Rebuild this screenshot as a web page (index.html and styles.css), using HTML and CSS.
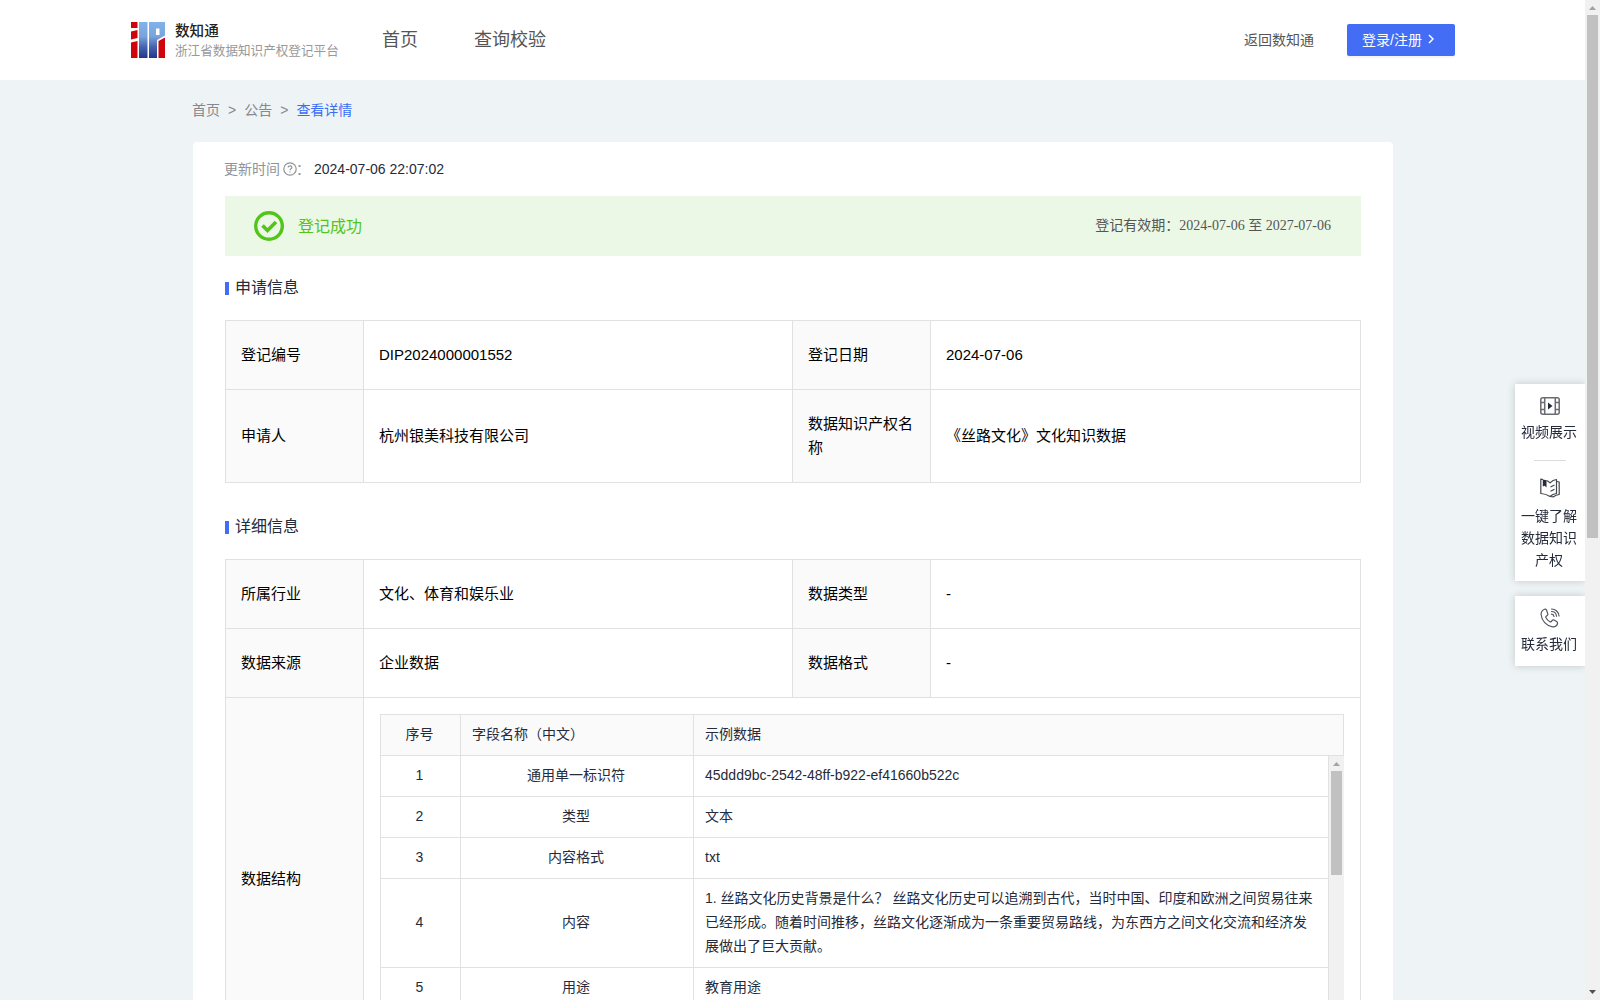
FILE: index.html
```html
<!DOCTYPE html>
<html lang="zh-CN">
<head>
    <meta charset="UTF-8">
    <meta name="viewport" content="width=device-width, initial-scale=1.0">
    <title>浙江省数据知识产权登记平台</title>
    <link rel="stylesheet" href="styles.css">
</head>
<body>
    <div class="page">
        <header class="header">
            <div class="logo">
                <svg class="logo-img" width="34" height="36" viewBox="0 0 34 36">
                    <defs>
                        <linearGradient id="blue" gradientUnits="userSpaceOnUse" x1="0" y1="0" x2="0" y2="36">
                            <stop offset="0" stop-color="#7fb4ea"/>
                            <stop offset="0.4" stop-color="#7aa3dc"/>
                            <stop offset="0.7" stop-color="#4562ae"/>
                            <stop offset="1" stop-color="#24368a"/>
                        </linearGradient>
                    </defs>
                    <path fill="#d0050c" d="M0 0h6.500v6H0zM0 9.500L6.500 8v8L0 17.500zM0 20.500L6.500 19v17H0zM27.500 19l6.500-3.500V36h-6.500z"/>
                    <path fill="url(#blue)" d="M8 0h8.500v36H8z"/>
                    <path fill="url(#blue)" fill-rule="evenodd" d="M18 0h16v13.500l-8 4.500v18h-8zM25 6.500v6.500h3.500V6.500z"/>
                </svg>
                <div class="logo-text">
                    <strong>数知通</strong>
                    <span>浙江省数据知识产权登记平台</span>
                </div>
            </div>
            <nav class="nav">
                <a>首页</a>
                <a>查询校验</a>
            </nav>
            <a class="back">返回数知通</a>
            <button class="login">登录/注册
                <svg width="6" height="10" viewBox="0 0 6 10"><path d="M1 1l4 4-4 4" fill="none" stroke="#fff" stroke-width="1.5"/></svg>
            </button>
        </header>

        <main class="main">
            <div class="breadcrumb">
                <span>首页</span><i>&gt;</i><span>公告</span><i>&gt;</i><span class="current">查看详情</span>
            </div>

            <div class="card">
                <div class="update">
                    <span>更新时间</span>
                    <svg width="14" height="14" viewBox="0 0 14 14" fill="none" stroke="#909399" stroke-width="1.2">
                        <circle cx="7" cy="7" r="6.200"/>
                        <path d="M5.200 5.600c0-2.400 3.700-2.300 3.700-.1 0 1.400-1.900 1.300-1.900 2.700M7 9.400v1.200"/>
                    </svg>
                    <span class="colon">：</span>
                    <b>2024-07-06 22:07:02</b>
                </div>

                <!-- 登记状态 -->
                <div class="status">
                    <svg width="30" height="30" viewBox="0 0 30 30" fill="none" stroke="#52c41a">
                        <circle cx="15" cy="15" r="13.300" stroke-width="3.400"/>
                        <path d="M8.500 14.500l5 5 8.500-8.500" stroke-width="3.600"/>
                    </svg>
                    <span class="status-text">登记成功</span>
                    <span class="valid">登记有效期：2024-07-06 至 2027-07-06</span>
                </div>

                <h2 class="title"><span>申请信息</span></h2>
                <table class="info">
                    <colgroup><col class="c1"><col class="c2"><col class="c3"><col class="c4"></colgroup>
                    <tr>
                        <th>登记编号</th><td>DIP2024000001552</td>
                        <th>登记日期</th><td>2024-07-06</td>
                    </tr>
                    <tr>
                        <th>申请人</th><td>杭州银美科技有限公司</td>
                        <th>数据知识产权名称</th><td>《丝路文化》文化知识数据</td>
                    </tr>
                </table>

                <h2 class="title"><span>详细信息</span></h2>
                <table class="info">
                    <colgroup><col class="c1"><col class="c2"><col class="c3"><col class="c4"></colgroup>
                    <tr>
                        <th>所属行业</th><td>文化、体育和娱乐业</td>
                        <th>数据类型</th><td>-</td>
                    </tr>
                    <tr>
                        <th>数据来源</th><td>企业数据</td>
                        <th>数据格式</th><td>-</td>
                    </tr>
                    <tr>
                        <th>数据结构</th>
                        <td class="nested" colspan="3">
                            <div class="grid">
                                <div class="row head">
                                    <div class="no">序号</div><div class="name">字段名称（中文）</div><div class="sample">示例数据</div>
                                </div>
                                <div class="grid-body">
                                    <div class="rows">
                                        <div class="row">
                                            <div class="no">1</div><div class="name">通用单一标识符</div><div class="sample">45ddd9bc-2542-48ff-b922-ef41660b522c</div>
                                        </div>
                                        <div class="row">
                                            <div class="no">2</div><div class="name">类型</div><div class="sample">文本</div>
                                        </div>
                                        <div class="row">
                                            <div class="no">3</div><div class="name">内容格式</div><div class="sample">txt</div>
                                        </div>
                                        <div class="row">
                                            <div class="no">4</div><div class="name">内容</div><div class="sample">1. 丝路文化历史背景是什么？ 丝路文化历史可以追溯到古代，当时中国、印度和欧洲之间贸易往来已经形成。随着时间推移，丝路文化逐渐成为一条重要贸易路线，为东西方之间文化交流和经济发展做出了巨大贡献。</div>
                                        </div>
                                        <div class="row">
                                            <div class="no">5</div><div class="name">用途</div><div class="sample">教育用途</div>
                                        </div>
                                    </div>
                                    <div class="bar bar-inner">
                                        <svg width="15" height="15"><path d="M4 10l3.500-4 3.500 4z" fill="#a3a3a3"/></svg>
                                        <div class="thumb"></div>
                                    </div>
                                </div>
                            </div>
                        </td>
                    </tr>
                </table>
            </div>
        </main>
    </div>

    <!-- 右侧悬浮栏 -->
    <aside class="side">
        <div class="side-box">
            <div class="side-item">
                <svg width="20" height="18" viewBox="0 0 20 18" fill="none" stroke="#6b6c72" stroke-width="1.500">
                    <rect x=".8" y=".8" width="18.400" height="16.400" rx="2"/>
                    <path d="M4.700 1v16M15.300 1v16M1 5.500h3.700M1 12.500h3.700M15.300 5.500H19M15.300 12.500H19"/>
                    <path d="M8 5.500v7l4.500-3.500z" fill="#252b3a" stroke="none"/>
                </svg>
                <span>视频展示</span>
            </div>
            <hr>
            <div class="side-item book">
                <svg width="20" height="20" viewBox="0 0 20 20" fill="none" stroke="#44464e" stroke-width="1.200" stroke-linejoin="round">
                    <path d="M3 1.500L.8 1.200v14.300c4 .2 6.500 1.200 9.200 3 1.500-1.600 3.500-2.700 6.500-3V1.500c-2.700.3-4.700 1.500-6.500 3.300-1-1-2-1.700-3.500-2.300"/>
                    <path d="M17 3.500l2.200.5v12.500c-2.200.2-4 .9-5.700 2.300L10 18.500M10.500 9l4-2M10.500 13.200l4-2"/>
                    <path d="M2.800 1.500l3.700.8V9.500L4.700 7.700 2.800 8.500z" fill="#252b3a" stroke="none"/>
                </svg>
                <span>一键了解数据知识产权</span>
            </div>
        </div>
        <div class="side-box contact">
            <div class="side-item">
                <svg width="20" height="20" viewBox="0 0 20 20" fill="none" stroke="#55575e" stroke-width="1.200" stroke-linecap="round">
                    <path d="M4.500 1.200C2.500 2 1 4 1.100 6.500 1.500 12.500 6.500 18 12.500 18.800c2.500.2 4.500-1.300 5-3.300.2-.8 0-1.300-.6-1.700l-2.800-1.700c-.7-.4-1.500-.2-2 .4l-.8 1c-.4.400-.9.500-1.400.200-1.900-1-3.200-2.400-4-4.200-.2-.5-.1-1 .3-1.300l1.200-1c.5-.5.600-1.200.300-1.800L6.400 1.800c-.4-.7-1.100-.9-1.900-.6z"/>
                    <path d="M11.500 1c4 0 7.300 3 7.500 7M11.500 3.500c2.700 0 4.700 2 5 4.700M11.500 6.200c1.400.1 2.300 1 2.500 2.300"/>
                </svg>
                <span>联系我们</span>
            </div>
        </div>
    </aside>

    <div class="bar bar-page">
        <svg width="15" height="15"><path d="M4 10l3.500-4 3.500 4z" fill="#a3a3a3"/></svg>
        <div class="thumb"></div>
        <svg class="down" width="15" height="15"><path d="M4 5l3.500 4L11 5z" fill="#505050"/></svg>
    </div>
</body>
</html>
```
FILE: styles.css
```css
* {
    box-sizing: border-box;
}
body {
    margin: 0;
    display: flex;
    height: 1000px;
    overflow: hidden;
    background: #eef3f6;
    color: #252b3a;
    font-family: "Liberation Sans", "Noto Sans CJK SC", sans-serif;
    font-size: 14px;
}
svg {
    display: block;
    flex: none;
}
.page {
    flex: 1;
    min-width: 0;
    height: 1000px;
    overflow: hidden;
}
.header {
    display: flex;
    align-items: center;
    height: 80px;
    padding: 0 130px 0 131px;
    background: #fff;
    color: #555;
}
.logo {
    display: flex;
    align-items: center;
    gap: 10px;
    width: 251px;
}
.logo-text {
    display: flex;
    flex-direction: column;
    font-family: "Noto Sans CJK SC", sans-serif;
    font-size: 12.6px;
    line-height: 20px;
    color: #999;
    white-space: nowrap;
}
.logo-text strong {
    font-size: 14.6px;
    font-weight: 500;
    color: #222;
}
.nav {
    display: flex;
    gap: 56px;
    flex: 1;
    font-size: 18px;
    line-height: 28px;
}
.back {
    margin-right: 33px;
    padding-bottom: 2px;
}
.login {
    display: flex;
    align-items: center;
    gap: 6px;
    width: 108px;
    height: 32px;
    padding: 0 0 3px 15px;
    border: none;
    border-radius: 2px;
    background: #446df5;
    box-shadow: 0 2px 0 rgba(0, 0, 0, 0.04);
    color: #fff;
    font-family: inherit;
    font-size: 14px;
    white-space: nowrap;
}
.main {
    width: 1200px;
    margin: 0 auto 0 193px;
}
.breadcrumb {
    height: 62px;
    margin-left: -1px;
    line-height: 61px;
    color: #86888c;
}
.breadcrumb i {
    margin: 0 8px;
    font-style: normal;
}
.breadcrumb .current {
    color: #3b6cf6;
}
.card {
    height: 940px;
    padding: 16px 32px;
    border-radius: 4px;
    background: #fff;
}
.update {
    display: flex;
    align-items: center;
    height: 22px;
    color: #909399;
}
.update span {
    margin-left: -1px;
    padding-bottom: 2px;
}
.update svg {
    margin-left: 3px;
}
.update .colon {
    width: 18px;
}
.update b {
    font-weight: normal;
    color: #252b3a;
}
.status {
    display: flex;
    align-items: center;
    height: 60px;
    margin-top: 16px;
    padding: 0 30px 0 29px;
    background: #ebf8e6;
}
.status-text {
    margin-left: 14px;
    padding-bottom: 3px;
    font-size: 16px;
    color: #52c41a;
}
.valid {
    margin-left: auto;
    padding-bottom: 4px;
    font-family: "Liberation Serif", "Noto Sans CJK SC", serif;
    color: #555;
}
.title {
    display: flex;
    align-items: center;
    gap: 6px;
    height: 24px;
    margin: 20px 0;
    font-size: 16px;
    font-weight: normal;
}
.title span {
    padding-bottom: 4px;
}
.title::before {
    content: "";
    width: 4px;
    height: 13px;
    background: #446df5;
}
.info {
    width: 1136px;
    table-layout: fixed;
    border-collapse: collapse;
    color: #000;
    font-size: 15px;
    line-height: 24px;
}
.info + .title {
    margin-top: 32px;
}
.c1,
.c3 {
    width: 138px;
}
.c2 {
    width: 429px;
}
.info th,
.info td {
    padding: 22px 17px 22px 15px;
    border: 1px solid #e1e1e1;
    font-weight: normal;
    text-align: left;
}
.info th {
    background: #fafafa;
}
.info .nested {
    padding: 16px;
}
.grid {
    height: 329px;
    border: 1px solid #e1e1e1;
    border-right: none;
    overflow: hidden;
    color: #252b3a;
    font-size: 14px;
}
.grid-body {
    display: flex;
}
.rows {
    flex: 1;
}
.row {
    display: flex;
    border-bottom: 1px solid #e1e1e1;
}
.row > div {
    display: flex;
    align-items: center;
    padding: 7px 13px 9px 11px;
    border-right: 1px solid #e1e1e1;
}
.row .no {
    width: 80px;
    justify-content: center;
}
.row .name {
    width: 233px;
    justify-content: center;
}
.row .sample {
    flex: 1;
}
.head {
    background: #fafafa;
}
.head .name {
    justify-content: flex-start;
}
.bar {
    width: 15px;
    background: #f1f1f1;
}
.bar .thumb {
    width: 11px;
    margin-left: 2px;
    background: #c1c1c1;
}
.bar-inner {
    height: 288px;
}
.bar-inner .thumb {
    height: 104px;
}
.bar-page {
    display: flex;
    flex-direction: column;
    height: 1000px;
}
.bar-page .thumb {
    height: 523px;
}
.bar-page .down {
    margin-top: auto;
}
/* overlays the page next to the scrollbar */
.side {
    position: fixed;
    top: 384px;
    right: 15px;
    width: 70px;
    display: flex;
    flex-direction: column;
    gap: 15px;
    clip-path: inset(-12px 0 -12px -12px);
}
.side-box {
    padding: 13px 7px 10px;
    background: #fff;
    box-shadow: 0 0 8px rgba(0, 0, 0, 0.18);
    line-height: 22px;
    text-align: center;
}
.side-box.contact {
    padding: 12px 7px 11px;
}
.side-item {
    display: flex;
    flex-direction: column;
    align-items: center;
    gap: 6px;
}
.side-item span {
    margin: 0 1px 0 -1px;
}
.side-box hr {
    width: 32px;
    height: 1px;
    margin: 17px auto;
    border: none;
    background: #ddd;
}
.side-item.book {
    gap: 7px;
}
.contact .side-item {
    gap: 5px;
}
```
